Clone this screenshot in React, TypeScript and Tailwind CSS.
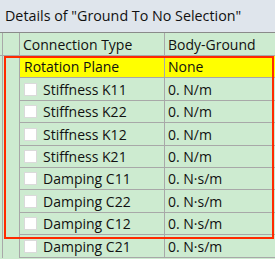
import React from 'react';

type Row = { name: string; value: string; h: string; check?: boolean; hl?: boolean };

const rows: Row[] = [
  { name: 'Rotation Plane', value: 'None', h: 'h-[22px]', hl: true },
  { name: 'Stiffness K11', value: '0. N/m', h: 'h-[23px]', check: true },
  { name: 'Stiffness K22', value: '0. N/m', h: 'h-[22px]', check: true },
  { name: 'Stiffness K12', value: '0. N/m', h: 'h-[23px]', check: true },
  { name: 'Stiffness K21', value: '0. N/m', h: 'h-[22px]', check: true },
  { name: 'Damping C11', value: '0. N·s/m', h: 'h-[22px]', check: true },
  { name: 'Damping C22', value: '0. N·s/m', h: 'h-[23px]', check: true },
  { name: 'Damping C12', value: '0. N·s/m', h: 'h-[22px]', check: true },
  { name: 'Damping C21', value: '0. N·s/m', h: 'h-[23px]', check: true },
];

const font = { fontFamily: '"Open Sans", "Noto Sans", sans-serif' };

const App: React.FC = () => {
  return (
    <div className="w-[275px] h-[259px] overflow-hidden bg-[#cdebd0] text-[#111] relative" style={font}>
      {/* title */}
      <div className="h-[33px] bg-[#dfe5ec] border-b border-[#8a8a8a] flex items-center pl-[5px] text-[14.3px] whitespace-nowrap">
        Details of "Ground To No Selection"
      </div>

      {/* header */}
      <div className="flex h-[23px] border-b border-[#a8a8a8] text-[14px]">
        <div className="w-[18px] ml-[2px] border-l border-r border-[#a8a8a8] shrink-0" />
        <div className="w-[145px] border-r border-[#a8a8a8] flex items-center pl-[3px] whitespace-nowrap">Connection Type</div>
        <div className="flex-1 flex items-center pl-[3px] whitespace-nowrap">Body-Ground</div>
      </div>

      {rows.map((r) => (
        <div key={r.name} className={`flex ${r.h} text-[14px]`}>
          <div className="w-[18px] ml-[2px] border-l border-r border-[#a8a8a8] shrink-0" />
          <div className={`w-[145px] border-r border-b border-[#a8a8a8] flex items-center pl-[4px] whitespace-nowrap ${r.hl ? 'bg-[#ffff00]' : ''}`}>
            {r.check && <span className="w-[13px] h-[13px] bg-white border border-[#dadada] mr-[6px] shrink-0" />}
            {r.name}
          </div>
          <div className={`flex-1 border-b border-[#a8a8a8] flex items-center pl-[3px] whitespace-nowrap ${r.hl ? 'bg-[#ffff00]' : ''}`}>
            {r.value}
          </div>
        </div>
      ))}

      {/* red selection frame */}
      <div className="absolute left-[4px] top-[56px] w-[270px] h-[183px] border-2 border-[#ff2a00] pointer-events-none" />
    </div>
  );
};

export default App;
